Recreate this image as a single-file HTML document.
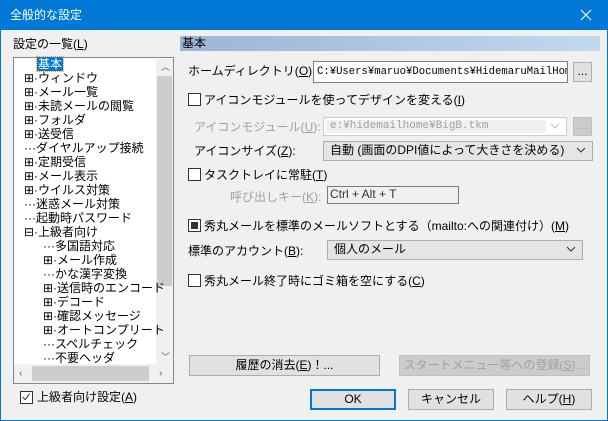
<!DOCTYPE html>
<html><head><meta charset="utf-8"><style>
*{box-sizing:border-box;margin:0;padding:0}
body{width:608px;height:421px;overflow:hidden;background:#f0f0f0;font-family:"Liberation Sans","Noto Sans CJK JP",sans-serif;font-size:12px;color:#000;position:relative}
.frame{position:absolute;left:0;top:0;width:608px;height:421px;border:1px solid #0078d7}
.title{position:absolute;left:0;top:0;width:608px;height:30px;background:#0078d7;color:#fff;font-size:12px;line-height:30px;padding-left:10px}
.x{position:absolute;right:14px;top:7px;width:16px;height:16px}
.a{position:absolute;white-space:nowrap;line-height:14px}
u{text-decoration:underline}
.box{position:absolute;background:#fff;border:1px solid #7a7a7a}
.cb{position:absolute;width:13px;height:13px;border:1px solid #333;background:#fff}
.btn{position:absolute;background:#e1e1e1;border:1px solid #adadad;text-align:center;line-height:18px}
.combo{position:absolute;background:#e5e5e5;border:1px solid #adadad;padding-left:6px;line-height:17px}
.chev{position:absolute;right:6px;top:4px;width:10px;height:8px}
.dis{color:#a0a0a0}
.tree .a{line-height:14px}
</style></head><body>
<div class="frame"></div>
<div class="title">全般的な設定
<svg class="x" viewBox="0 0 16 16"><path d="M3 3L13 13M13 3L3 13" stroke="#fff" stroke-width="1.2"/></svg></div>

<div class="a" style="left:13px;top:37px">設定の一覧(<u>L</u>)</div>
<div class="box tree" style="left:13px;top:57px;width:161px;height:327px;border-color:#828790">
 <div style="position:absolute;left:142px;top:1px;width:17px;height:305px;background:#f0f0f0"></div>
 <div style="position:absolute;left:143px;top:18px;width:15px;height:210px;background:#cdcdcd"></div>
 <div style="position:absolute;left:0;top:306px;width:159px;height:19px;background:#f0f0f0"></div>
 <div style="position:absolute;left:18px;top:308px;width:117px;height:15px;background:#cdcdcd"></div>
 <div class="a" style="left:147px;top:2px;font-size:9px;color:#606060">︿</div>
 <div class="a" style="left:147px;top:292px;font-size:9px;color:#606060">﹀</div>
 <div class="a" style="left:5px;top:309px;font-size:10px;color:#606060">‹</div>
 <div class="a" style="left:145px;top:309px;font-size:10px;color:#606060">›</div>
</div>
<div class="tree" style="position:absolute;left:13px;top:57px">
 <div class="a" style="left:24px;top:0;background:#0078d7;color:#fff;outline:1px dotted #f90;padding:0 1px">基本</div>
 <div class="a" style="left:11px;top:14px">⊞·ウィンドウ</div>
 <div class="a" style="left:11px;top:28px">⊞·メール一覧</div>
 <div class="a" style="left:11px;top:42px">⊞·未読メールの閲覧</div>
 <div class="a" style="left:11px;top:56px">⊞·フォルダ</div>
 <div class="a" style="left:11px;top:70px">⊞·送受信</div>
 <div class="a" style="left:11px;top:84px">···ダイヤルアップ接続</div>
 <div class="a" style="left:11px;top:98px">⊞·定期受信</div>
 <div class="a" style="left:11px;top:112px">⊞·メール表示</div>
 <div class="a" style="left:11px;top:126px">⊞·ウイルス対策</div>
 <div class="a" style="left:11px;top:140px">···迷惑メール対策</div>
 <div class="a" style="left:11px;top:154px">···起動時パスワード</div>
 <div class="a" style="left:11px;top:168px">⊟·上級者向け</div>
 <div class="a" style="left:30px;top:182px">···多国語対応</div>
 <div class="a" style="left:30px;top:196px">⊞·メール作成</div>
 <div class="a" style="left:30px;top:210px">···かな漢字変換</div>
 <div class="a" style="left:30px;top:224px">⊞·送信時のエンコード</div>
 <div class="a" style="left:30px;top:238px">⊞·デコード</div>
 <div class="a" style="left:30px;top:252px">⊞·確認メッセージ</div>
 <div class="a" style="left:30px;top:266px">⊞·オートコンプリート</div>
 <div class="a" style="left:30px;top:280px">···スペルチェック</div>
 <div class="a" style="left:30px;top:294px">···不要ヘッダ</div>
</div>
<div class="cb" style="left:20px;top:391px"><svg viewBox="0 0 13 13" width="11" height="11"><path d="M2 6L5 9L10 2" stroke="#333" fill="none" stroke-width="1.2"/></svg></div>
<div class="a" style="left:37px;top:390px">上級者向け設定(<u>A</u>)</div>

<div style="position:absolute;left:180px;top:36px;width:420px;height:15px;background:linear-gradient(90deg,#9cb5d2,#c2d8ee)"></div>
<div class="a" style="left:182px;top:36px">基本</div>

<div class="a" style="left:188px;top:64px">ホームディレクトリ(<u>O</u>):</div>
<div class="box" style="left:313px;top:61px;width:255px;height:22px;border-color:#7a7a7a;padding:3px 3px;font-family:'Liberation Mono','Noto Sans CJK JP',monospace;font-size:10.6px;overflow:hidden;white-space:nowrap;line-height:14px">C:¥Users¥maruo¥Documents¥HidemaruMailHome¥</div>
<div class="btn" style="left:573px;top:62px;width:19px;height:20px;line-height:16px">...</div>

<div class="cb" style="left:188px;top:93px"></div>
<div class="a" style="left:204px;top:93px">アイコンモジュールを使ってデザインを変える(<u>I</u>)</div>

<div class="a dis" style="left:194px;top:120px">アイコンモジュール(<u>U</u>):</div>
<div class="box" style="left:323px;top:117px;width:244px;height:19px;border-color:#ccc;background:#fff"><div style="position:absolute;left:2px;top:2px;width:220px;height:13px;background:#f0f0f0"></div><span class="a dis" style="left:6px;top:1px;font-family:'Liberation Mono',monospace;font-size:11px">e:¥hidemailhome¥BigB.tkm</span><svg class="chev" viewBox="0 0 10 8"><path d="M1 2L5 6L9 2" stroke="#bbb" fill="none"/></svg></div>
<div class="btn dis" style="left:573px;top:117px;width:19px;height:19px;background:#ccc;border-color:#bfbfbf;line-height:15px">...</div>

<div class="a" style="left:194px;top:144px">アイコンサイズ(<u>Z</u>):</div>
<div class="combo" style="left:323px;top:141px;width:270px;height:20px">自動 (画面のDPI値によって大きさを決める)<svg class="chev" viewBox="0 0 10 8"><path d="M1 2L5 6L9 2" stroke="#333" fill="none"/></svg></div>

<div class="cb" style="left:188px;top:168px"></div>
<div class="a" style="left:204px;top:168px">タスクトレイに常駐(<u>T</u>)</div>

<div class="a dis" style="left:230px;top:190px">呼び出しキー(<u>K</u>):</div>
<div class="box" style="left:327px;top:186px;width:132px;height:18px;background:#f0f0f0;border-color:#7a7a7a;padding-left:2px;line-height:14px;color:#333">Ctrl + Alt + T</div>

<div class="cb" style="left:188px;top:219px"><div style="position:absolute;left:2px;top:2px;width:7px;height:7px;background:#333"></div></div>
<div class="a" style="left:204px;top:219px">秀丸メールを標準のメールソフトとする（mailto:への関連付け）(<u>M</u>)</div>

<div class="a" style="left:188px;top:244px">標準のアカウント(<u>B</u>):</div>
<div class="combo" style="left:327px;top:240px;width:256px;height:20px">個人のメール<svg class="chev" viewBox="0 0 10 8"><path d="M1 2L5 6L9 2" stroke="#333" fill="none"/></svg></div>

<div class="cb" style="left:188px;top:274px"></div>
<div class="a" style="left:204px;top:274px">秀丸メール終了時にゴミ箱を空にする(<u>C</u>)</div>

<div class="btn" style="left:189px;top:355px;width:191px;height:21px">履歴の消去(<u>E</u>)！...</div>
<div class="btn dis" style="left:399px;top:355px;width:191px;height:21px;background:#ccc;border-color:#bfbfbf">スタートメニュー等への登録(<u>S</u>)...</div>

<div class="btn" style="left:310px;top:389px;width:86px;height:21px;border:2px solid #0078d7;line-height:17px">OK</div>
<div class="btn" style="left:408px;top:389px;width:86px;height:21px">キャンセル</div>
<div class="btn" style="left:506px;top:389px;width:86px;height:21px">ヘルプ(<u>H</u>)</div>
</body></html>
